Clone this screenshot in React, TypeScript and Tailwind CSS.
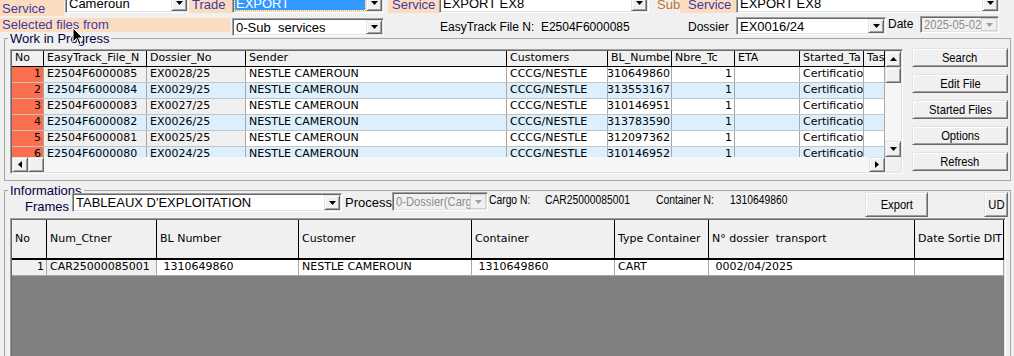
import React from 'react';

// --- STYLE TOKENS ---
const UI = "font-['Liberation_Sans',Arial,sans-serif]";
const GRID = "font-['DejaVu_Sans',Verdana,sans-serif]";

const raised =
  'bg-[#f0f0f0] border border-t-[#e3e3e3] border-l-[#e3e3e3] border-r-[#696969] border-b-[#696969] shadow-[inset_1px_1px_0_#fff,inset_-1px_-1px_0_#a0a0a0]';
const sunken =
  'border border-t-[#a0a0a0] border-l-[#a0a0a0] border-r-white border-b-white shadow-[inset_1px_1px_0_#696969,inset_-1px_-1px_0_#e3e3e3]';

// --- ICONS ---
const Tri = ({
  dir = 'down',
  color = '#000',
}: {
  dir?: 'down' | 'up' | 'left' | 'right';
  color?: string;
}) => {
  const vertical = dir === 'down' || dir === 'up';
  const pts = {
    down: '0,0 7,0 3.5,4',
    up: '0,4 7,4 3.5,0',
    left: '4,0 4,7 0,3.5',
    right: '0,0 0,7 4,3.5',
  }[dir];
  return (
    <svg
      width={vertical ? 7 : 4}
      height={vertical ? 4 : 7}
      viewBox={vertical ? '0 0 7 4' : '0 0 4 7'}
    >
      <polygon points={pts} fill={color} />
    </svg>
  );
};

const Cursor = () => (
  <svg width="14" height="20" viewBox="0 0 14 20" className="absolute left-[72px] top-[27px]">
    <path d="M1 1 L1 15 L4.5 11.5 L7 17.5 L9 16.6 L6.6 11 L11 11 Z" fill="#000" stroke="#fff" strokeWidth="1" />
  </svg>
);

// narrow "MS Sans Serif" look
const Narrow = ({ children, center = false }: { children: React.ReactNode; center?: boolean }) => (
  <span
    className={`inline-block whitespace-pre scale-x-[0.86] ${center ? 'origin-center' : 'origin-left'}`}
  >
    {children}
  </span>
);

// --- CONTROLS ---
const Label = ({ children, className = '' }: { children: React.ReactNode; className?: string }) => (
  <div className={`bg-[#fcdcc0] text-[#3c3ca0] text-[13px] pl-[2px] whitespace-nowrap overflow-hidden ${className}`}>
    {children}
  </div>
);

function Combo({
  text,
  className = '',
  selected = false,
  disabled = false,
  narrow = false,
}: {
  text: string;
  className?: string;
  selected?: boolean;
  disabled?: boolean;
  narrow?: boolean;
}) {
  return (
    <div className={`flex p-px ${sunken} ${disabled ? 'bg-[#f0f0f0]' : 'bg-white'} ${className}`}>
      {selected ? (
        <div className="flex flex-1 items-center min-w-0 m-px bg-[#3399ff] outline-1 outline-dotted outline-[#ffb000] pl-[1px]">
          <span className="whitespace-nowrap text-white text-[13px] leading-[15px]">{text}</span>
        </div>
      ) : (
        <div className="flex flex-1 items-center min-w-0 overflow-hidden pl-[2px]">
          <span
            className={`whitespace-nowrap text-[13px] leading-[15px] ${disabled ? 'text-[#8d8d8d]' : 'text-black'}`}
          >
            {narrow ? <Narrow>{text}</Narrow> : text}
          </span>
        </div>
      )}
      <div
        className={`flex w-[16px] shrink-0 items-center justify-center ${
          disabled ? 'bg-[#f0f0f0] border border-[#d0d0d0]' : raised
        }`}
      >
        <Tri color={disabled ? '#a0a0a0' : '#000'} />
      </div>
    </div>
  );
}

const Btn = ({ children, className = '' }: { children: React.ReactNode; className?: string }) => (
  <div className={`flex items-center justify-center text-[13px] text-black ${raised} ${className}`}>
    <Narrow center>{children}</Narrow>
  </div>
);

// --- DATA ---
const wipRows = [
  ['1', 'E2504F6000085', 'EX0028/25', '1310649860'],
  ['2', 'E2504F6000084', 'EX0029/25', '1313553167'],
  ['3', 'E2504F6000083', 'EX0027/25', '1310146951'],
  ['4', 'E2504F6000082', 'EX0026/25', '1313783590'],
  ['5', 'E2504F6000081', 'EX0025/25', '1312097362'],
  ['6', 'E2504F6000080', 'EX0024/25', '1310146952'],
];

const wipHead = [
  { t: 'No', w: 'w-[32px]' },
  { t: 'EasyTrack_File_N', w: 'w-[103px]' },
  { t: 'Dossier_No', w: 'w-[99px]' },
  { t: 'Sender', w: 'w-[261px]' },
  { t: 'Customers', w: 'w-[101px]' },
  { t: 'BL_Numbe', w: 'w-[64px]' },
  { t: 'Nbre_Tc', w: 'w-[63px]' },
  { t: 'ETA', w: 'w-[65px]' },
  { t: 'Started_Ta', w: 'w-[64px]' },
  { t: 'Tas', w: 'flex-1' },
];

const infoHead = [
  { t: 'No', w: 'w-[35px]' },
  { t: 'Num_Ctner', w: 'w-[110px]' },
  { t: 'BL Number', w: 'w-[142px]' },
  { t: 'Customer', w: 'w-[173px]' },
  { t: 'Container', w: 'w-[143px]' },
  { t: 'Type Container', w: 'w-[94px]' },
  { t: 'N° dossier  transport', w: 'w-[206px]' },
  { t: 'Date Sortie DIT', w: 'flex-1' },
];

const cell = 'flex items-center overflow-hidden whitespace-nowrap border-r border-[#a8a8a8] px-[3px] shrink-0';

export default function App() {
  return (
    <div className={`relative w-[1014px] h-[356px] overflow-hidden bg-[#f0f0f0] text-black ${UI}`}>
      {/* TOP ROW 1 */}
      <div className="flex items-end h-[16px]">
        <Label className="w-[64px] h-[16px] pt-[1px] leading-[16px]">Service</Label>
        <Combo className="ml-px mb-[3px] w-[124px] h-[20px] shrink-0" text="Cameroun" />
        <Label className="mb-[3px] w-[43px] h-[13px] leading-[10px] pl-[3px]">Trade</Label>
        <Combo className="mb-[3px] w-[152px] h-[20px] shrink-0" text="EXPORT" selected />
        <Label className="ml-[4px] mb-[3px] w-[51px] h-[13px] leading-[10px] pl-[4px]">Service</Label>
        <Combo className="mb-[3px] w-[210px] h-[20px] shrink-0" text="EXPORT EX8" />
        <div className="mb-[3px] ml-[8px] w-[23px] h-[13px] text-[13px] leading-[10px] text-[#c07020]">Sub</div>
        <Label className="mb-[3px] w-[56px] h-[13px] leading-[10px] pl-[8px]">Service</Label>
        <Combo className="mb-[3px] w-[264px] h-[20px] shrink-0" text="EXPORT EX8" />
      </div>

      {/* TOP ROW 2 */}
      <div className="flex items-start h-[16px]">
        <Label className="mt-[2px] w-[230px] h-[14px] leading-[14px] shrink-0">Selected files from</Label>
        <Combo className="ml-[2px] mt-[2px] w-[152px] h-[18px] shrink-0" text="0-Sub_services" />
        <div className="ml-[56px] mt-[4px] w-[248px] shrink-0 text-[12px] leading-[14px] whitespace-pre">
          EasyTrack File N:  E2504F6000085
        </div>
        <div className="mt-[4px] w-[48px] shrink-0 text-[12px] leading-[14px]">Dossier</div>
        <Combo className="mt-px w-[150px] h-[18px] shrink-0" text="EX0016/24" />
        <div className="ml-[2px] mt-[1px] w-[32px] shrink-0 text-[12px] leading-[14px]">Date</div>
        <Combo className="w-[79px] h-[17px] shrink-0" text="2025-05-02" disabled narrow />
      </div>

      {/* WORK IN PROGRESS */}
      <fieldset className="ml-[4px] mr-[3px] h-[149px] border border-[#a6a6a6]">
        <legend className="ml-[3px] px-[2px] text-[13px] leading-[13px] text-[#000040]">Work in Progress</legend>
        <div className="flex pl-[5px] mt-[4px]">
          {/* grid */}
          <div className={`flex flex-col w-[893px] h-[125px] p-px shrink-0 bg-white ${sunken}`}>
            <div className="flex h-[106px]">
              <div className={`flex-1 min-w-0 overflow-hidden text-[11px] ${GRID}`}>
                <div className="flex h-[16px] bg-[#f0f0f0] border-b border-black">
                  {wipHead.map((c) => (
                    <div key={c.t} className={`${cell} ${c.w} border-black`}>
                      {c.t}
                    </div>
                  ))}
                </div>
                {wipRows.map((r, i) => {
                  const even = i % 2 === 1;
                  const row = even ? 'bg-[#dbeffc]' : 'bg-white';
                  const first = even ? 'bg-[#dbeffc]' : 'bg-[#f0f0f0]';
                  return (
                    <div key={r[0]} className={`flex h-[16px] border-b border-[#c4c4c4] ${row}`}>
                      <div className={`${cell} w-[32px] justify-end bg-[#fb6f4f] pr-[2px]`}>{r[0]}</div>
                      <div className={`${cell} w-[103px] ${first}`}>{r[1]}</div>
                      <div className={`${cell} w-[99px] ${first}`}>{r[2]}</div>
                      <div className={`${cell} w-[261px]`}>NESTLE CAMEROUN</div>
                      <div className={`${cell} w-[101px]`}>CCCG/NESTLE</div>
                      <div className={`${cell} w-[64px] justify-end pr-[1px]`}>{r[3]}</div>
                      <div className={`${cell} w-[63px] justify-end pr-[2px]`}>1</div>
                      <div className={`${cell} w-[65px]`} />
                      <div className={`${cell} w-[64px]`}>Certification</div>
                      <div className={`${cell} flex-1`} />
                    </div>
                  );
                })}
              </div>
              {/* vertical scrollbar */}
              <div className="flex flex-col w-[16px] shrink-0 bg-[#f6f6f6]">
                <div className={`flex h-[16px] items-center justify-center ${raised}`}>
                  <Tri dir="up" />
                </div>
                <div className={`h-[16px] ${raised}`} />
                <div className="flex-1" />
                <div className={`flex h-[16px] items-center justify-center ${raised}`}>
                  <Tri dir="down" />
                </div>
              </div>
            </div>
            {/* horizontal scrollbar */}
            <div className="flex h-[15px] bg-[#f6f6f6]">
              <div className={`flex w-[16px] items-center justify-center ${raised}`}>
                <Tri dir="left" />
              </div>
              <div className={`w-[16px] ${raised}`} />
              <div className="flex-1" />
              <div className={`flex w-[16px] items-center justify-center ${raised}`}>
                <Tri dir="right" />
              </div>
              <div className="w-[16px] bg-[#f0f0f0]" />
            </div>
          </div>

          {/* buttons */}
          <div className="flex flex-col gap-[7px] ml-[9px] -mt-[1px]">
            <Btn className="w-[96px] h-[19px]">Search</Btn>
            <Btn className="w-[96px] h-[19px]">Edit File</Btn>
            <Btn className="w-[96px] h-[19px]">Started Files</Btn>
            <Btn className="w-[96px] h-[19px]">Options</Btn>
            <Btn className="w-[96px] h-[19px]">Refresh</Btn>
          </div>
        </div>
      </fieldset>

      {/* INFORMATIONS */}
      <fieldset className="ml-[4px] mr-[3px] mt-[3px] h-[200px] border border-[#a6a6a6]">
        <legend className="ml-[3px] px-[2px] text-[13px] leading-[13px] text-[#000040]">Informations</legend>
        <div className="flex items-start h-[26px] -mt-[5px] pl-[20px]">
          <div className="mt-[7px] w-[47px] shrink-0 text-[13px] leading-[15px] text-[#000040]">Frames</div>
          <Combo className="mt-[1px] w-[270px] h-[19px] shrink-0" text="TABLEAUX D'EXPLOITATION" />
          <div className="ml-[3px] mt-[3px] w-[47px] shrink-0 text-[13px] leading-[15px]">Process</div>
          <Combo className="w-[96px] h-[19px] shrink-0" text="0-Dossier(Cargo" disabled narrow />
          <div className="ml-[1px] mt-[1px] w-[56px] shrink-0 text-[12px] leading-[14px]">
            <Narrow>Cargo N:</Narrow>
          </div>
          <div className="mt-[1px] w-[111px] shrink-0 text-[12px] leading-[14px]">
            <Narrow>CAR25000085001</Narrow>
          </div>
          <div className="mt-[1px] w-[74px] shrink-0 text-[12px] leading-[14px]">
            <Narrow>Container N:</Narrow>
          </div>
          <div className="mt-[1px] w-[135px] shrink-0 text-[12px] leading-[14px]">
            <Narrow>1310649860</Narrow>
          </div>
          <Btn className="w-[63px] h-[25px] shrink-0">Export</Btn>
          <Btn className="ml-[56px] w-[24px] h-[25px] shrink-0">UD</Btn>
        </div>

        <div className={`ml-[5px] w-[996px] h-[140px] p-px bg-[#808080] text-[11px] ${GRID} ${sunken}`}>
          <div className="flex h-[40px] bg-[#f0f0f0] border-b-2 border-black">
            {infoHead.map((c) => (
              <div key={c.t} className={`${cell} ${c.w} border-black whitespace-pre`}>
                {c.t}
              </div>
            ))}
          </div>
          <div className="flex h-[16px] bg-white border-b border-[#a8a8a8]">
            <div className={`${cell} w-[35px] justify-end bg-[#f0f0f0] pr-[2px]`}>1</div>
            <div className={`${cell} w-[110px] bg-[#f0f0f0]`}>CAR25000085001</div>
            <div className={`${cell} w-[142px] whitespace-pre`}> 1310649860</div>
            <div className={`${cell} w-[173px]`}>NESTLE CAMEROUN</div>
            <div className={`${cell} w-[143px] whitespace-pre`}> 1310649860</div>
            <div className={`${cell} w-[94px]`}>CART</div>
            <div className={`${cell} w-[206px] whitespace-pre`}> 0002/04/2025</div>
            <div className={`${cell} flex-1`} />
          </div>
        </div>
      </fieldset>

      <Cursor />
    </div>
  );
}
